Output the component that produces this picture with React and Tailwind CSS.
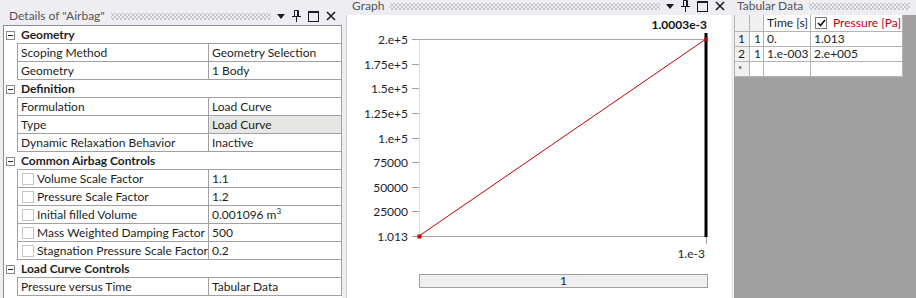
import React from 'react';

const font = { fontFamily: 'Lato, "Open Sans", sans-serif' };

const rows = [
    { kind: 'cat', label: 'Geometry' },
    { kind: 'row', label: 'Scoping Method', value: 'Geometry Selection' },
    { kind: 'row', label: 'Geometry', value: '1 Body' },
    { kind: 'cat', label: 'Definition' },
    { kind: 'row', label: 'Formulation', value: 'Load Curve' },
    { kind: 'row', label: 'Type', value: 'Load Curve', shaded: true },
    { kind: 'row', label: 'Dynamic Relaxation Behavior', value: 'Inactive' },
    { kind: 'cat', label: 'Common Airbag Controls' },
    { kind: 'chk', label: 'Volume Scale Factor', value: '1.1' },
    { kind: 'chk', label: 'Pressure Scale Factor', value: '1.2' },
    { kind: 'chk', label: 'Initial filled Volume', value: <>0.001096 m<sup className="text-[8px]">3</sup></> },
    { kind: 'chk', label: 'Mass Weighted Damping Factor', value: '500' },
    { kind: 'chk', label: 'Stagnation Pressure Scale Factor', value: '0.2' },
    { kind: 'cat', label: 'Load Curve Controls' },
    { kind: 'row', label: 'Pressure versus Time', value: 'Tabular Data' },
];

const yTicks = ['2.e+5', '1.75e+5', '1.5e+5', '1.25e+5', '1.e+5', '75000', '50000', '25000', '1.013'];

function Dots() {
    // grip pattern of the dock panel title
    return (
        <div className="flex-1 mx-[6px] h-[7px] bg-[radial-gradient(circle,#b0b0bc_0.6px,transparent_0.9px),radial-gradient(circle,#b0b0bc_0.6px,transparent_0.9px)] bg-[length:4px_4px] bg-[position:0_0,2px_2px]" />
    );
}

function PanelIcons() {
    return (
        <div className="flex items-center gap-[7px] pr-[6px] text-[#1b1b2b]">
            <svg width="8" height="5" viewBox="0 0 8 5"><path d="M0 0h8L4 5z" fill="currentColor" /></svg>
            <svg width="9" height="12" viewBox="0 0 9 12" fill="none" stroke="currentColor">
                <path d="M2.5 0.5v6M6.5 0.5v6M2.5 0.5h4M0 6.5h9M4.5 6.5v5.5" />
                <path d="M5.5 1v5" />
            </svg>
            <svg width="11" height="11" viewBox="0 0 11 11" fill="none" stroke="currentColor">
                <rect x="0.5" y="0.5" width="10" height="10" />
                <path d="M0 1.5h11" />
            </svg>
            <svg width="10" height="10" viewBox="0 0 10 10" stroke="currentColor" strokeWidth="1.6">
                <path d="M1 1l8 8M9 1l-8 8" />
            </svg>
        </div>
    );
}

function DetailsPanel() {
    return (
        <div className="ml-[3px] mt-[7px] w-[339px] flex flex-col">
            <div className="h-[18px] flex items-center">
                <span className="pl-[6px] text-[12px] text-[#555]">Details of "Airbag"</span>
                <Dots />
                <PanelIcons />
            </div>
            <div className="flex-1 bg-white border-l border-t border-[#8c8c96] text-[12px] text-[#1e1e1e]">
                {rows.map((r, i) => (
                    <div key={i} className="flex h-[18px]">
                        <div className="w-[13px] flex items-center">
                            {r.kind === 'cat' && (
                                <div className="ml-[2px] w-[9px] h-[9px] border border-[#8a8a8a] flex items-center justify-center">
                                    <div className="w-[5px] h-px bg-[#222]" />
                                </div>
                            )}
                        </div>
                        {r.kind === 'cat' ? (
                            <div className="flex-1 flex items-center pl-[4px] font-bold border-b border-r border-[#a0a0a0]">
                                {r.label}
                            </div>
                        ) : (
                            <div className="flex-1 flex border-l border-r border-b border-[#a0a0a0]">
                                <div className="w-[190px] flex items-center pl-[3px] whitespace-nowrap">
                                    {r.kind === 'chk' && (
                                        <div className="ml-[1px] mr-[3px] w-[12px] h-[12px] border border-[#c4c4c4] bg-white" />
                                    )}
                                    {r.label}
                                </div>
                                <div className={`flex-1 flex items-center pl-[3px] border-l border-[#a0a0a0] whitespace-nowrap ${r.shaded ? 'bg-[#e6e6e4]' : ''}`}>
                                    {r.value}
                                </div>
                            </div>
                        )}
                    </div>
                ))}
            </div>
        </div>
    );
}

function GraphPanel() {
    const top = 24;
    const bottom = 221;
    const step = (bottom - top) / 8;
    return (
        <div className="ml-[4px] w-[385px] flex flex-col">
            <div className="h-[15px] overflow-hidden">
                <div className="-mt-[3px] h-[18px] flex items-center">
                    <span className="pl-[6px] text-[12px] text-[#555]">Graph</span>
                    <Dots />
                    <PanelIcons />
                </div>
            </div>
            <div className="flex-1 bg-white border-l border-[#cfcfd4]">
                <svg width="384" height="259" className="block" style={font}>
                    <line x1="72.5" y1={top} x2="72.5" y2={bottom} stroke="#dcdcdc" />
                    <line x1="65" y1={top + 0.5} x2="359" y2={top + 0.5} stroke="#a8a8a8" />
                    <line x1="65" y1={bottom + 0.5} x2="359" y2={bottom + 0.5} stroke="#a8a8a8" />
                    {yTicks.map((t, i) => {
                        const y = Math.round(top + i * step) + 0.5;
                        return (
                            <g key={t}>
                                <line x1="65" y1={y} x2="72" y2={y} stroke="#a0a0a0" />
                                <text x="61" y={y + 4} textAnchor="end" fontSize="12" fill="#1e1e2e">{t}</text>
                            </g>
                        );
                    })}
                    <line x1="359.5" y1={bottom} x2="359.5" y2={bottom + 8} stroke="#a0a0a0" />
                    <rect x="357.5" y="18" width="3" height={bottom - 18 + 1} fill="#000" />
                    <line x1="72" y1={bottom} x2="359" y2={top} stroke="#c00000" strokeWidth="1" />
                    <rect x="70.5" y={bottom - 1.5} width="4" height="4" fill="#c00000" />
                    <rect x="357.5" y={top - 1.5} width="3" height="4" fill="#c00000" />
                    <text x="360" y="14" textAnchor="end" fontSize="12" fontWeight="bold" fill="#111">1.0003e-3</text>
                    <text x="358" y="243" textAnchor="end" fontSize="12" fill="#1e1e2e">1.e-3</text>
                </svg>
                <div className="ml-[72px] w-[289px] h-[14px] border border-[#a0a0a0] bg-[#efefef] flex items-center justify-center text-[12px] text-[#1e1e1e]">
                    1
                </div>
            </div>
        </div>
    );
}

function TabularPanel() {
    const cell = 'border-r border-b border-[#b4b4b4] flex items-center whitespace-nowrap';
    return (
        <div className="ml-[3px] flex-1 flex flex-col">
            <div className="h-[15px] overflow-hidden">
                <div className="-mt-[3px] h-[18px] flex items-center">
                    <span className="pl-[3px] text-[12px] text-[#555]">Tabular Data</span>
                    <Dots />
                </div>
            </div>
            <div className="flex-1 bg-[#a0a0a0]">
                <div className="grid grid-cols-[15px_14px_47px_92px] grid-rows-[17px_15px_15px_15px] w-fit border-l border-[#b4b4b4] text-[12px] text-[#1e1e1e]">
                    <div className={`${cell} bg-[#f0f0f0]`} />
                    <div className={`${cell} bg-[#f0f0f0]`} />
                    <div className={`${cell} bg-white pl-[3px]`}>Time [s]</div>
                    <div className={`${cell} bg-white pl-[4px]`}>
                        <div className="w-[12px] h-[12px] border border-[#7a7a7a] flex items-center justify-center mr-[6px]">
                            <svg width="9" height="8" viewBox="0 0 9 8" fill="none" stroke="#111" strokeWidth="1.6">
                                <path d="M1 4l2.5 2.5L8 1" />
                            </svg>
                        </div>
                        <span className="text-[#c00018]">Pressure [Pa]</span>
                    </div>

                    <div className={`${cell} bg-[#f0f0f0] pl-[3px]`}>1</div>
                    <div className={`${cell} bg-white pl-[4px]`}>1</div>
                    <div className={`${cell} bg-white pl-[3px]`}>0.</div>
                    <div className={`${cell} bg-white pl-[3px]`}>1.013</div>

                    <div className={`${cell} bg-[#f0f0f0] pl-[3px]`}>2</div>
                    <div className={`${cell} bg-white pl-[4px]`}>1</div>
                    <div className={`${cell} bg-white pl-[3px]`}>1.e-003</div>
                    <div className={`${cell} bg-white pl-[3px]`}>2.e+005</div>

                    <div className={`${cell} bg-[#f0f0f0] pl-[3px] text-[10px]`}>*</div>
                    <div className={`${cell} bg-white`} />
                    <div className={`${cell} bg-white`} />
                    <div className={`${cell} bg-white`} />
                </div>
            </div>
        </div>
    );
}

export default function App() {
    return (
        <div className="w-[916px] h-[298px] overflow-hidden bg-[#eeeef2] flex" style={font}>
            <DetailsPanel />
            <GraphPanel />
            <TabularPanel />
        </div>
    );
}
